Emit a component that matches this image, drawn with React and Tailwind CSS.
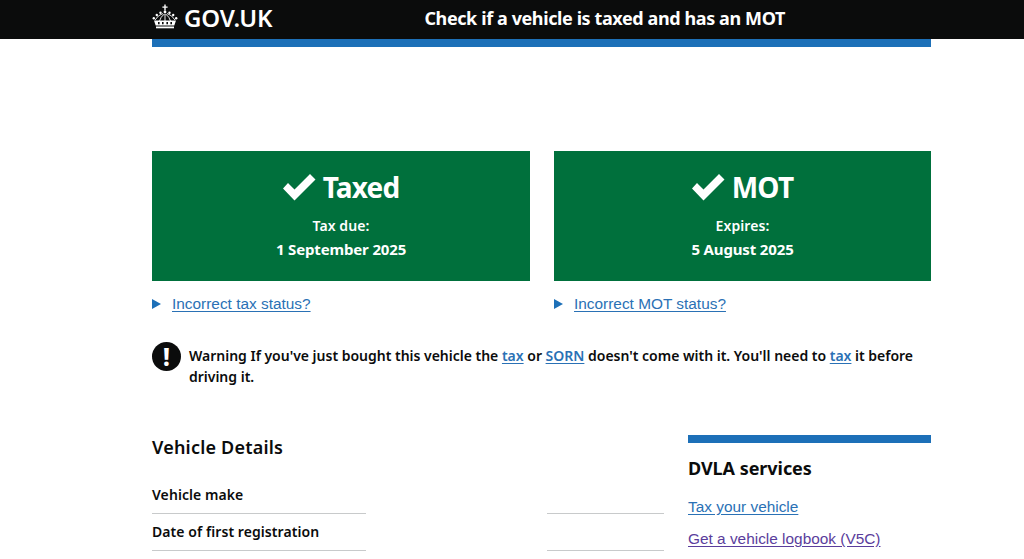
const font = "font-['Noto_Sans','Liberation_Sans',sans-serif]";

function Crown() {
  return (
    <svg width="26" height="26" viewBox="0 0 26 26" fill="white" aria-hidden="true" className="-mt-[3px]">
      <path d="M12.300 0.500h1.400v2h1.900v1.300h-1.900v2.700h-1.400V3.800h-1.900V2.500h1.900z" />
      <circle cx="13" cy="8" r="1.400" />
      <circle cx="8.500" cy="8.800" r="1.200" />
      <circle cx="17.500" cy="8.800" r="1.200" />
      <circle cx="4.800" cy="11" r="1.200" />
      <circle cx="21.200" cy="11" r="1.200" />
      <circle cx="1.800" cy="14.300" r="1.200" />
      <circle cx="24.200" cy="14.300" r="1.200" />
      <path d="M3 16 q3 -5 8 -6.500 M23 16 q-3 -5 -8 -6.500 M7.500 17 q1 -4 4.800 -7 M18.500 17 q-1 -4 -4.800 -7 M13 10 v7" stroke="white" strokeWidth="0.900" fill="none" />
      <path d="M2 16.500h22l-1.700 5H3.700z" />
      <path d="M4 22.500h18v1.800H4z" />
      <path d="M6 18h1.600v2.300H6zM10 18h1.600v2.300H10zM14.400 18h1.600v2.300h-1.600zM18.400 18h1.600v2.300h-1.600z" fill="#0b0c0c" />
    </svg>
  );
}

function Check() {
  return (
    <svg width="33" height="27" viewBox="0 0 33 27" fill="white" aria-hidden="true">
      <path d="M0 14.500 L5 9 L11.500 15.500 L27 0 L32.500 5.500 L11.500 26.500 Z" />
    </svg>
  );
}

function StatusCard({ title, label, date }) {
  return (
    <div className="flex h-[130px] flex-col items-center bg-[#00703c] text-white">
      <div className="mt-[18px] flex h-[36px] items-center gap-[7px]">
        <Check />
        <span className="text-[28px] leading-[36px] font-bold tracking-[-0.8px]">{title}</span>
      </div>
      <p className="mt-[9px] text-[14px] leading-[24px] font-semibold tracking-[0.1px]">{label}</p>
      <p className="-mt-[1px] text-[15px] leading-[24px] font-bold tracking-[-0.15px]">{date}</p>
    </div>
  );
}

function Disclosure({ children }) {
  return (
    <div className="mt-[13px] flex h-[20px] items-center font-['Liberation_Sans',Arial,sans-serif] text-[15.4px] leading-[20px] text-[#2a71b5]">
      <span className="mr-[11px] h-0 w-0 border-y-[5px] border-l-[9px] border-y-transparent border-l-[#1d70b8]" />
      <a className="underline underline-offset-2" href="#">{children}</a>
    </div>
  );
}

function Row({ label }) {
  return (
    <div className="grid h-[37px] grid-cols-[214px_181px_117px] items-end">
      <div className="flex h-full items-center border-b border-[#c8cacb] pb-[2px] text-[14px] font-semibold tracking-[0.07px] text-[#0b0c0c]">{label}</div>
      <div />
      <div className="h-full border-b border-[#c8cacb]" />
    </div>
  );
}

function InlineLink({ children }) {
  return <a className="text-[#2a71b5] underline underline-offset-2" href="#">{children}</a>;
}

export default function App() {
  return (
    <div className={`${font} h-[559px] w-full overflow-hidden bg-white text-[#0b0c0c]`}>
      <header className="flex h-[39px] bg-[#0b0c0c] pl-[152px]">
        <div className="flex w-[779px] items-center pb-[3px] text-white">
          <Crown />
          <span className="ml-[6px] text-[24px] leading-none font-semibold tracking-[-0.2px]">GOV.UK</span>
          <span className="ml-[152px] text-[18px] leading-none font-bold tracking-[-0.4px]">Check if a vehicle is taxed and has an MOT</span>
        </div>
      </header>

      <main className="ml-[152px] w-[779px]">
        <div className="h-[8px] bg-[#1d70b8]" />

        <section className="mt-[104px] grid grid-cols-[378px_377px] gap-x-[24px]">
          <div>
            <StatusCard title="Taxed" label="Tax due:" date="1 September 2025" />
            <Disclosure>Incorrect tax status?</Disclosure>
          </div>
          <div>
            <StatusCard title="MOT" label="Expires:" date="5 August 2025" />
            <Disclosure>Incorrect MOT status?</Disclosure>
          </div>
        </section>

        <section className="mt-[28px] flex">
          <span className="flex h-[29px] w-[29px] shrink-0 items-center justify-center rounded-full bg-[#0b0c0c] text-[24px] leading-none font-extrabold text-white">!</span>
          <p className="mt-[3px] ml-[8px] w-[735px] text-[14px] leading-[21px] font-semibold tracking-[-0.01px]">
            Warning If you've just bought this vehicle the <InlineLink>tax</InlineLink> or <InlineLink>SORN</InlineLink> doesn't come with it. You'll need to <InlineLink>tax</InlineLink> it before driving it.
          </p>
        </section>

        <section className="mt-[48px] grid grid-cols-[512px_243px] gap-x-[24px]">
          <div>
            <h2 className="text-[18px] leading-[24px] font-semibold tracking-[0.2px]">Vehicle Details</h2>
            <div className="mt-[18px]">
              <Row label="Vehicle make" />
              <Row label="Date of first registration" />
            </div>
          </div>
          <aside>
            <div className="h-[8px] bg-[#1d70b8]" />
            <h2 className="mt-[13px] text-[18px] leading-[24px] font-bold tracking-[-0.05px]">DVLA services</h2>
            <ul className="mt-[17px] font-['Liberation_Sans',Arial,sans-serif] text-[15.4px] leading-[20px]">
              <li><a className="text-[#2a71b5] underline underline-offset-2" href="#">Tax your vehicle</a></li>
              <li className="mt-[12px]"><a className="text-[#5a3d9c] underline underline-offset-2" href="#">Get a vehicle logbook (V5C)</a></li>
            </ul>
          </aside>
        </section>
      </main>
    </div>
  );
}
